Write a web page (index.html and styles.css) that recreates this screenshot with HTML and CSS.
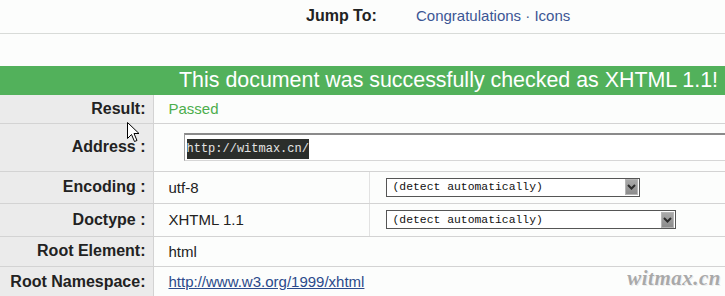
FILE: index.html
```html
<!DOCTYPE html>
<html lang="en">
<head>
  <meta charset="UTF-8">
  <title>Markup Validation Result</title>
  <link rel="stylesheet" href="styles.css">
</head>
<body>
  <div class="jump">
    <span class="jump-label">Jump To:</span>
    <span class="jump-links"><a href="#congrats">Congratulations</a> &middot; <a href="#icons">Icons</a></span>
  </div>

  <h2 class="valid" id="congrats">This document was successfully checked as XHTML 1.1!</h2>

  <table class="results">
    <colgroup>
      <col class="col-label">
      <col class="col-value">
      <col>
    </colgroup>
    <tr class="row-result">
      <th>Result:</th>
      <td colspan="2" class="passed">Passed</td>
    </tr>
    <tr class="row-address">
      <th>Address :</th>
      <td colspan="2" class="address-cell">
        <div class="addr-field"><span class="sel">http://witmax.cn/</span></div>
      </td>
    </tr>
    <tr class="row-encoding">
      <th>Encoding :</th>
      <td class="split">utf-8</td>
      <td class="select-cell">
        <div class="fake-select">
          <span class="opt">(detect automatically)</span>
          <span class="arrow"><svg width="9" height="6" viewBox="0 0 9 6"><path d="M1 1 L4.5 4.5 L8 1" fill="none" stroke="#2b2b2b" stroke-width="2"/></svg></span>
        </div>
      </td>
    </tr>
    <tr class="row-doctype">
      <th>Doctype :</th>
      <td class="split">XHTML 1.1</td>
      <td class="select-cell">
        <div class="fake-select wide">
          <span class="opt">(detect automatically)</span>
          <span class="arrow"><svg width="9" height="6" viewBox="0 0 9 6"><path d="M1 1 L4.5 4.5 L8 1" fill="none" stroke="#2b2b2b" stroke-width="2"/></svg></span>
        </div>
      </td>
    </tr>
    <tr class="row-root">
      <th>Root Element:</th>
      <td colspan="2">html</td>
    </tr>
    <tr class="row-ns">
      <th>Root Namespace:</th>
      <td colspan="2"><a class="ns-link" href="#ns">http://www.w3.org/1999/xhtml</a></td>
    </tr>
  </table>

  <svg class="cursor" width="13" height="21" viewBox="0 0 13 21">
    <path d="M0.5 0.5 L0.5 16.5 L4.5 12.5 L7.5 19.5 L10 18.5 L7 11.5 L12 11.5 Z" fill="#fff" stroke="#000" stroke-width="1"/>
  </svg>

  <div class="watermark">witmax.cn</div>
</body>
</html>
```

FILE: styles.css
```css
* {
  margin: 0;
  padding: 0;
  box-sizing: border-box;
}

html,
body {
  overflow: hidden;
}

body {
  font-family: "Liberation Sans", Arial, sans-serif;
  background: #fcfdfc;
  color: #222;
  position: relative;
  height: 296px;
}

.jump {
  height: 34px;
  border-bottom: 1px solid #d8dbd8;
  display: flex;
  align-items: center;
  padding-left: 306px;
  padding-bottom: 2px;
}

.jump-label {
  font-weight: bold;
  font-size: 16px;
  color: #222;
  width: 110px;
}

.jump-links {
  font-size: 15px;
  color: #4a5f8f;
}

.jump-links a {
  color: #3b5694;
  text-decoration: none;
}

.valid {
  margin-top: 32px;
  height: 29px;
  line-height: 29px;
  background: #52b15b;
  color: #fff;
  font-size: 21.4px;
  font-weight: normal;
  text-align: right;
  padding-right: 7px;
}

.results {
  width: 100%;
  border-collapse: collapse;
  table-layout: fixed;
}

.col-label {
  width: 153px;
}

.col-value {
  width: 216px;
}

.results th {
  background: #ebebeb;
  text-align: right;
  font-size: 16px;
  font-weight: bold;
  color: #222;
  padding-right: 7px;
  border-right: 1px solid #d3d3d3;
  border-bottom: 1px solid #d3d3d3;
  white-space: nowrap;
}

.results td {
  font-size: 15px;
  color: #222;
  padding-left: 15px;
  border-bottom: 1px solid #d3d3d3;
  white-space: nowrap;
}

.results td.split {
  border-right: 1px solid #e2e2e2;
}

.row-result {
  height: 28px;
}

.row-address {
  height: 48px;
}

.row-encoding {
  height: 32px;
}

.row-doctype {
  height: 33px;
}

.row-root {
  height: 30px;
}

.row-ns {
  height: 31px;
}

.results td.passed {
  color: #4cae4c;
}

.address-cell {
  overflow: hidden;
}

.addr-field {
  margin-left: 15px;
  width: 600px;
  height: 28px;
  background: #fff;
  border-top: 2px solid #8a8a8a;
  border-left: 1px solid #9a9a9a;
  border-bottom: 1px solid #d6d6d6;
  padding: 3px 0 0 2px;
}

.sel {
  display: inline-block;
  background: #2b2e2b;
  color: #e4e4e4;
  font-family: "Liberation Mono", "Courier New", monospace;
  font-size: 12px;
  line-height: 20px;
  height: 20px;
}

.results td.select-cell {
  padding-left: 16px;
}

.fake-select {
  width: 254px;
  height: 19px;
  border: 1px solid #555;
  background: #fff;
  display: flex;
  align-items: center;
  justify-content: space-between;
  padding-left: 6px;
  padding-right: 1px;
}

.fake-select.wide {
  width: 290px;
}

.opt {
  font-family: "Liberation Mono", "Courier New", monospace;
  font-size: 11.4px;
  color: #111;
}

.arrow {
  width: 13px;
  height: 16px;
  background: linear-gradient(#a9a9a9, #8c8c8c);
  border: 1px solid #b5b5b5;
  display: flex;
  align-items: center;
  justify-content: center;
}

.ns-link {
  color: #2b4a8b;
}

.cursor {
  position: absolute;
  left: 127px;
  top: 122px;
}

.watermark {
  position: absolute;
  right: 4px;
  bottom: 5px;
  font-family: "Liberation Serif", "Times New Roman", serif;
  font-style: italic;
  font-weight: bold;
  font-size: 21px;
  letter-spacing: 0.5px;
  color: #a9a9a9;
  text-shadow: 0 0 2px #fff, 1px 1px 0 #e8e8e8;
}
```
